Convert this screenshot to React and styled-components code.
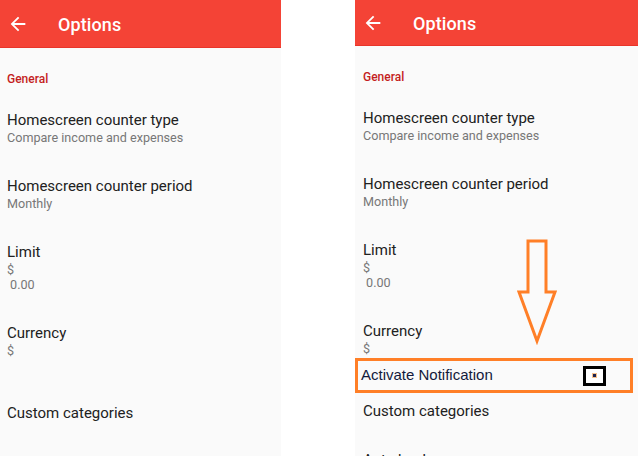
import React from "react"
import styled, { createGlobalStyle } from "styled-components"

const GlobalStyle = createGlobalStyle`
  html, body {
    margin: 0;
    padding: 0;
    background: #fff;
  }
  body {
    font-family: Roboto, "Noto Sans", sans-serif;
  }
`

const Page = styled.div`
  display: flex;
  justify-content: space-between;
  width: 638px;
  height: 456px;
  overflow: hidden;
  background: #fff;
`

const Panel = styled.div`
  position: relative;
  display: flex;
  flex-direction: column;
  width: ${p => p.$width}px;
  height: 456px;
  background: #fafafa;
  overflow: hidden;
`

const Header = styled.header`
  flex: none;
  display: flex;
  align-items: center;
  gap: 29px;
  height: ${p => p.$height}px;
  padding-left: 7px;
  background: #f44336;
  box-shadow: inset 0 -1px 0 #e8352a;
`

const HeaderTitle = styled.h1`
  margin: 0;
  color: #fff;
  font-size: 18px;
  font-weight: 500;
  letter-spacing: 0.1px;
`

const List = styled.div`
  display: flex;
  flex-direction: column;
  padding-left: ${p => p.$inset}px;
`

const Category = styled.div`
  padding: 23px 0 8px;
  color: #c41e1e;
  font-size: 12px;
  font-weight: 500;
  line-height: 16px;
`

const Row = styled.div`
  display: flex;
  flex-direction: column;
  padding: ${p => p.$top ?? 15}px 0 ${p => p.$bottom ?? 16}px;
`

const RowTitle = styled.div`
  color: #212121;
  font-size: 15px;
  line-height: 20px;
`

const Summary = styled.div`
  color: #777;
  font-size: 12.6px;
  line-height: 15px;
  white-space: pre;
`

const Callout = styled.div`
  position: absolute;
  left: 0;
  top: 358px;
  width: 278px;
  height: 35px;
  box-sizing: border-box;
  border: 3px solid #ff7f27;
  display: flex;
  align-items: center;
  justify-content: space-between;
  padding: 0 24px 2px 3px;
  background: #fafafa;
`

const CalloutLabel = styled.span`
  font-family: "Liberation Sans", Arial, sans-serif;
  font-size: 15px;
  color: #141a3c;
`

const CheckBox = styled.span`
  display: flex;
  align-items: center;
  justify-content: center;
  width: 23px;
  height: 20px;
  margin-top: 2px;
  box-sizing: border-box;
  border: 3px solid #000;
  background: #fff;
`

const CheckDot = styled.span`
  width: 3px;
  height: 3px;
  background: #1c2450;
  box-shadow: 0 0 0 1px rgba(240, 150, 60, 0.6);
`

const Pointer = styled.svg`
  position: absolute;
  left: 160px;
  top: 237px;
`

function BackArrow() {
  return (
    <svg width="22" height="22" viewBox="0 0 24 24" fill="#fff">
      <path d="M20 11H7.83l5.59-5.59L12 4l-8 8 8 8 1.41-1.41L7.83 13H20v-2z" />
    </svg>
  )
}

const items = [
  { title: "Homescreen counter type", summary: "Compare income and expenses" },
  { title: "Homescreen counter period", summary: "Monthly" },
  { title: "Limit", summary: "$\n 0.00" },
  { title: "Currency", summary: "$" },
]

function Screen({ width, headerHeight, inset, children }) {
  return (
    <Panel $width={width}>
      <Header $height={headerHeight}>
        <BackArrow />
        <HeaderTitle>Options</HeaderTitle>
      </Header>
      <List $inset={inset}>
        <Category>General</Category>
        {items.map(item => (
          <Row key={item.title}>
            <RowTitle>{item.title}</RowTitle>
            <Summary>{item.summary}</Summary>
          </Row>
        ))}
        <Row $top={29} $bottom={14}>
          <RowTitle>Custom categories</RowTitle>
        </Row>
        <Row>
          <RowTitle>Auto backup</RowTitle>
          <Summary>Off</Summary>
        </Row>
      </List>
      {children}
    </Panel>
  )
}

export default function App() {
  return (
    <Page>
      <GlobalStyle />
      <Screen width={281} headerHeight={48} inset={7} />
      <Screen width={283} headerHeight={46} inset={8}>
        <Pointer width="44" height="108" viewBox="0 0 44 108">
          <polygon
            points="13,4 31,4 31,55 40,55 22,104 4,55 13,55"
            fill="none"
            stroke="#ff7f27"
            strokeWidth="3"
          />
        </Pointer>
        <Callout>
          <CalloutLabel>Activate Notification</CalloutLabel>
          <CheckBox>
            <CheckDot />
          </CheckBox>
        </Callout>
      </Screen>
    </Page>
  )
}
